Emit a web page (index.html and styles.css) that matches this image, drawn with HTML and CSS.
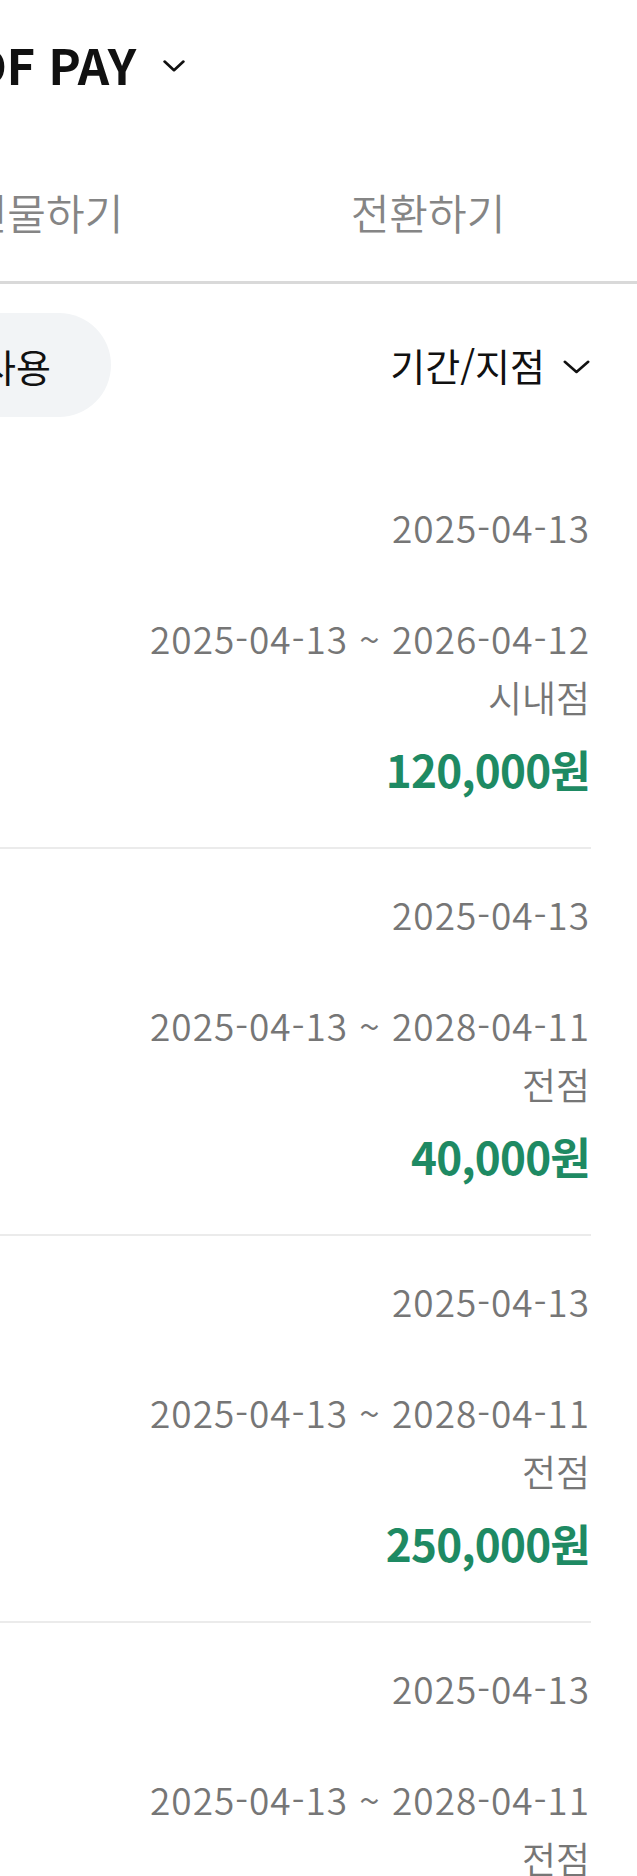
FILE: index.html
```html
<!DOCTYPE html>
<html lang="ko">
<head>
<meta charset="utf-8">
<title>DF PAY</title>
<link rel="stylesheet" href="styles.css">
</head>
<body>
<div class="page">
  <header class="header">
    <h1 class="title">DF PAY</h1>
    <svg class="title-chevron" width="22" height="12" viewBox="0 0 22 12" aria-hidden="true"><path d="M1.6 1.6 L11 10.2 L20.4 1.6" fill="none" stroke="#111" stroke-width="2.7" stroke-linecap="round" stroke-linejoin="round"/></svg>
  </header>

  <nav class="tabs">
    <div class="tab tab-first">선물하기</div>
    <div class="tab">전환하기</div>
  </nav>

  <div class="filters">
    <div class="pill">미사용</div>
    <div class="period">
      <span>기간/지점</span>
      <svg class="period-chevron" width="27" height="14" viewBox="0 0 27 14" aria-hidden="true"><path d="M1.8 1.8 L13.5 12 L25.2 1.8" fill="none" stroke="#111" stroke-width="2.6" stroke-linecap="round" stroke-linejoin="round"/></svg>
    </div>
  </div>

  <ul class="list">
    <li class="item">
      <div class="date">2025-04-13</div>
      <div class="range">2025-04-13 ~ 2026-04-12</div>
      <div class="store">시내점</div>
      <div class="amount">120,000원</div>
    </li>
    <li class="item">
      <div class="date">2025-04-13</div>
      <div class="range">2025-04-13 ~ 2028-04-11</div>
      <div class="store">전점</div>
      <div class="amount">40,000원</div>
    </li>
    <li class="item">
      <div class="date">2025-04-13</div>
      <div class="range">2025-04-13 ~ 2028-04-11</div>
      <div class="store">전점</div>
      <div class="amount">250,000원</div>
    </li>
    <li class="item">
      <div class="date">2025-04-13</div>
      <div class="range">2025-04-13 ~ 2028-04-11</div>
      <div class="store">전점</div>
      <div class="amount">30,000원</div>
    </li>
  </ul>
</div>
</body>
</html>
```

FILE: styles.css
```css
html, body {
  margin: 0;
  padding: 0;
  background: #ffffff;
}

body {
  font-family: "Noto Sans CJK KR", "Noto Sans", sans-serif;
  color: #111111;
  overflow-x: hidden;
}

.page {
  width: 637px;
  overflow: hidden;
}

.header {
  display: flex;
  align-items: center;
  gap: 27px;
  padding-top: 34px;
  height: 60px;
}

.title {
  margin: 0 0 0 -28px;
  font-size: 49px;
  line-height: 60px;
  font-weight: 700;
  letter-spacing: -0.4px;
  color: #111111;
  white-space: nowrap;
}

.title-chevron {
  flex: none;
  margin-top: 4px;
}

.tabs {
  display: flex;
  margin-left: -144px;
  padding-top: 88px;
  padding-bottom: 39px;
  border-bottom: 3px solid #d9d9d9;
}

.tab {
  flex: none;
  width: 384px;
  text-align: center;
  font-size: 42px;
  line-height: 60px;
  font-weight: 350;
  color: #858585;
  white-space: nowrap;
}

.tab-first {
  width: 380px;
}

.filters {
  display: flex;
  align-items: center;
  justify-content: space-between;
  margin-top: 29px;
  padding-right: 47px;
}

.pill {
  display: flex;
  align-items: center;
  height: 104px;
  margin-left: -94px;
  padding: 0 60px 0 40px;
  border-radius: 52px;
  background: #f2f4f6;
  font-size: 38px;
  color: #111111;
  white-space: nowrap;
}

.period {
  display: flex;
  align-items: center;
  gap: 18px;
  font-size: 38px;
  line-height: 52px;
  color: #111111;
  white-space: nowrap;
}

.period-chevron {
  flex: none;
  margin-top: 4px;
}

.list {
  list-style: none;
  margin: 45px 46px 0 0;
  padding: 0;
}

.item {
  display: flex;
  flex-direction: column;
  align-items: flex-end;
  padding: 39px 1px 46px 0;
  border-bottom: 2px solid #ebebeb;
  color: #767676;
  font-weight: 350;
  white-space: nowrap;
}

.date {
  font-size: 37px;
  line-height: 52px;
  letter-spacing: 1px;
}

.range {
  margin-top: 58px;
  font-size: 37px;
  line-height: 54px;
  letter-spacing: 1px;
}

.store {
  margin-top: 5px;
  font-size: 37px;
  line-height: 54px;
}

.amount {
  margin-top: 13px;
  font-size: 44px;
  line-height: 64px;
  font-weight: 700;
  letter-spacing: -0.8px;
  color: #1e8a63;
}
```
